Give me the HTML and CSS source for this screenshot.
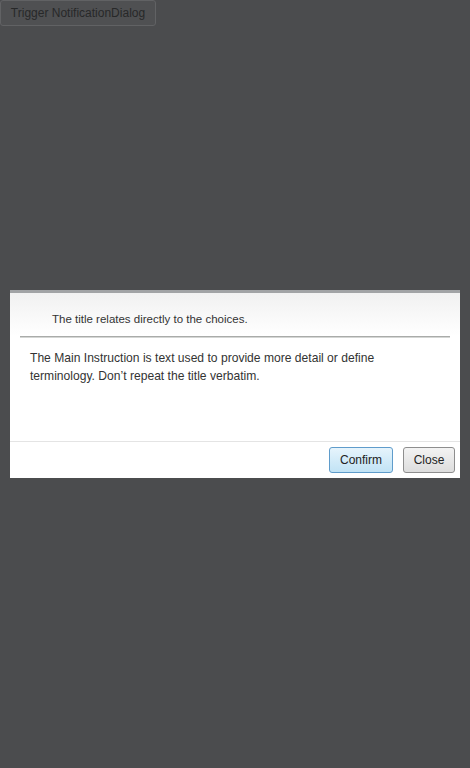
FILE: index.html
```html
<!DOCTYPE html>
<html>
<head>
<meta charset="utf-8">
<link rel="stylesheet" href="styles.css">
</head>
<body>
<button class="trigger">Trigger NotificationDialog</button>
<div class="overlay">
  <div class="dialog">
    <div class="dialog-header">
      <div class="dialog-title">The title relates directly to the choices.</div>
    </div>
    <div class="dialog-body">The Main Instruction is text used to provide more detail or define terminology. Don’t repeat the title verbatim.</div>
    <div class="dialog-footer">
      <button class="btn btn-primary">Confirm</button>
      <button class="btn btn-close">Close</button>
    </div>
  </div>
</div>
</body>
</html>
```
FILE: styles.css
```css
html, body {
  margin: 0;
  padding: 0;
  background: #4b4c4e;
  height: 100%;
  font-family: "Liberation Sans", Arial, sans-serif;
}
.trigger {
  display: block;
  margin: 0;
  height: 26px;
  width: 156px;
  padding: 0;
  font-family: "Liberation Sans", Arial, sans-serif;
  font-size: 12px;
  color: #272829;
  background: #4f5052;
  border: 1px solid #616264;
  border-radius: 3px;
}
.overlay {
  position: fixed;
  inset: 0;
  display: flex;
  align-items: center;
  justify-content: center;
}
.dialog {
  width: 450px;
  background: #fff;
  border-top: 3px solid #a1a3a5;
  display: flex;
  flex-direction: column;
}
.dialog-header {
  background: linear-gradient(#f1f1f1, #ffffff);
  padding: 19px 10px 10px 42px;
}
.dialog-title {
  font-size: 11.5px;
  line-height: 14px;
  color: #333;
}
.dialog-body {
  border-top: 1px solid #a9aba9;
  box-shadow: inset 0 1px 0 #d4d6d4;
  margin: 0 10px;
  padding: 12px 30px 56px 10px;
  font-size: 12.1px;
  line-height: 18px;
  color: #333;
}
.dialog-footer {
  border-top: 1px solid #e4e4e4;
  display: flex;
  justify-content: flex-end;
  gap: 10px;
  padding: 5px 5px 5px 0;
}
.btn {
  height: 26px;
  padding: 0;
  font-family: "Liberation Sans", Arial, sans-serif;
  font-size: 12px;
  color: #222;
  background: linear-gradient(#f3f3f3, #dddddd);
  border: 1px solid #8e8e8e;
  border-radius: 3px;
  margin: 0;
}
.btn-primary {
  width: 64px;
  background: linear-gradient(#e6f4fc, #c1e3f5);
  border-color: #5f9ccb;
}
.btn-close {
  width: 52px;
}
```
